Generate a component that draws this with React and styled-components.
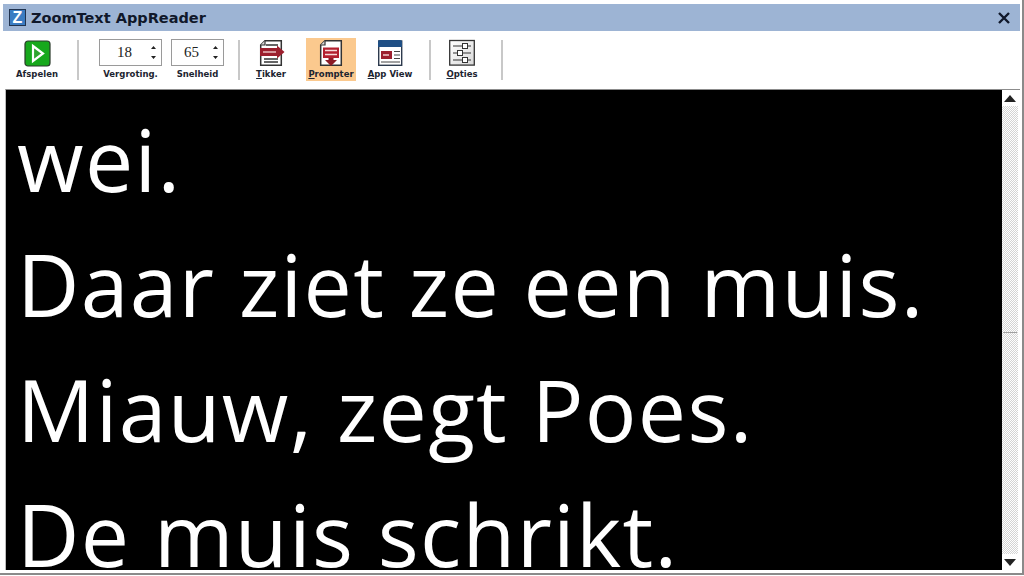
import React from 'react';
import styled, { createGlobalStyle } from 'styled-components';

const GlobalStyle = createGlobalStyle`
  html, body {
    margin: 0;
    padding: 0;
    background: #fff;
    overflow: hidden;
  }
`;

const Window = styled.div`
  width: 1024px;
  height: 575px;
  box-sizing: border-box;
  padding: 4px 2px 3px 3px;
  border-right: 2px solid #8a8a8a;
  border-bottom: 2px solid #8a8a8a;
  background: #fff;
  display: flex;
  flex-direction: column;
  overflow: hidden;
`;

const TitleBar = styled.div`
  height: 27px;
  flex: none;
  background: #9db4d4;
  display: flex;
  align-items: center;
  padding: 0 9px 0 6px;
  gap: 5px;
`;

const TitleLogo = styled.div`
  width: 17px;
  height: 17px;
  background: #3a7cc2;
  border: 1px solid #20334f;
  box-sizing: border-box;
  color: #fff;
  font: bold 16px/15px 'Liberation Sans', sans-serif;
  text-align: center;
`;

const TitleText = styled.div`
  flex: 1;
  font: bold 14.5px 'DejaVu Sans', sans-serif;
  color: #10182a;
`;

const Toolbar = styled.div`
  height: 58px;
  flex: none;
  display: flex;
  align-items: flex-start;
  padding: 7px 0 0 9px;
  box-sizing: border-box;
  background: #fff;
`;

const Tool = styled.div`
  width: 50px;
  height: 43px;
  flex: none;
  box-sizing: border-box;
  padding-bottom: 1px;
  display: flex;
  flex-direction: column;
  align-items: center;
  justify-content: flex-end;
  gap: 1px;
  margin-right: ${(p) => p.$gap || 0}px;
  background: ${(p) => (p.$active ? '#fbc98e' : 'transparent')};
`;

const ToolLabel = styled.span`
  font: bold 8.5px/12px 'DejaVu Sans', sans-serif;
  color: #1c2430;
  white-space: nowrap;
  u {
    text-decoration: underline;
  }
`;

const Divider = styled.div`
  width: 2px;
  height: 40px;
  flex: none;
  background: #c8c8c8;
  margin: 2px ${(p) => p.$right}px 0 ${(p) => p.$left}px;
`;

const SpinnerField = styled.div`
  width: ${(p) => p.$width}px;
  flex: none;
  display: flex;
  flex-direction: column;
  align-items: center;
  margin-right: ${(p) => p.$gap || 0}px;
  gap: 2px;
  padding-top: 1px;
`;

const SpinnerBox = styled.div`
  width: 100%;
  height: 27px;
  box-sizing: border-box;
  border: 1px solid #9a9a9a;
  display: flex;
  align-items: center;
  font: 15px 'Liberation Serif', serif;
  color: #222;
`;

const SpinnerValue = styled.span`
  flex: 1;
  text-align: center;
`;

const SpinnerArrows = styled.svg`
  width: 9px;
  height: 17px;
  margin-right: 3px;
  flex: none;
`;

const Content = styled.div`
  flex: 1;
  min-height: 0;
  display: flex;
  margin-left: 2px;
  border-top: 1px solid #8c8c8c;
  border-left: 1px solid #bdbdbd;
`;

const Reader = styled.div`
  flex: 1;
  min-width: 0;
  background: #000;
  color: #fff;
  overflow: hidden;
  padding: 6px 0 0 11px;
  font: 86px/125px 'Open Sans', sans-serif;
  letter-spacing: 1.3px;
`;

const ReaderLine = styled.div`
  white-space: nowrap;
`;

const Scrollbar = styled.div`
  width: 16px;
  flex: none;
  margin-right: 2px;
  display: flex;
  flex-direction: column;
  background: repeating-conic-gradient(#d4d4d4 0 25%, #fff 0 50%) 0 0 / 2px 2px;
`;

const ScrollButton = styled.div`
  height: 16px;
  flex: none;
  background: #fff;
  display: flex;
  align-items: center;
  justify-content: center;
`;

const ScrollThumb = styled.div`
  flex: none;
  height: 226px;
  border-bottom: 1px solid #a0a0a0;
  margin: 0 1px;
`;

const ScrollTrack = styled.div`
  flex: 1;
`;

function PageIcon({ children }) {
  return (
    <svg width="28" height="28" viewBox="0 0 28 28">
      <path d="M8 1.7 H24.3 V26.3 H3.7 V6 Z" fill="#fff" stroke="#333" strokeWidth="1.5" />
      <path d="M8 1.7 V6 H3.7" fill="#ddd" stroke="#333" strokeWidth="1.2" />
      {children}
    </svg>
  );
}

function SpinArrows() {
  return (
    <SpinnerArrows viewBox="0 0 9 17">
      <path d="M4.5 2 L7 5 H2 Z M4.5 15 L7 12 H2 Z" fill="#222" />
    </SpinnerArrows>
  );
}

export default function App() {
  return (
    <>
      <GlobalStyle />
      <Window>
        <TitleBar>
          <TitleLogo>Z</TitleLogo>
          <TitleText>ZoomText AppReader</TitleText>
          <svg width="14" height="14" viewBox="0 0 14 14">
            <path d="M2 2 L12 12 M12 2 L2 12" stroke="#10182a" strokeWidth="2.4" />
          </svg>
        </TitleBar>
        <Toolbar>
          <Tool $gap={15}>
            <svg width="27" height="27" viewBox="0 0 27 27">
              <rect x="1" y="1" width="25" height="25" rx="3" fill="#17a81c" stroke="#2a3a2a" strokeWidth="1.2" />
              <path d="M9 6 L19 13.5 L9 21 Z" fill="#2fa52f" stroke="#fff" strokeWidth="2.2" />
            </svg>
            <ToolLabel>Afspelen</ToolLabel>
          </Tool>
          <Divider $left={0} $right={20} />
          <SpinnerField $width={63} $gap={9}>
            <SpinnerBox>
              <SpinnerValue>18</SpinnerValue>
              <SpinArrows />
            </SpinnerBox>
            <ToolLabel>Vergroting.</ToolLabel>
          </SpinnerField>
          <SpinnerField $width={53}>
            <SpinnerBox>
              <SpinnerValue>65</SpinnerValue>
              <SpinArrows />
            </SpinnerBox>
            <ToolLabel>Snelheid</ToolLabel>
          </SpinnerField>
          <Divider $left={14} $right={6} />
          <Tool $gap={10}>
            <PageIcon>
              <path d="M9 6 H21 M7 20 H21 M7 23 H21" stroke="#333" strokeWidth="1.3" />
              <rect x="3" y="9" width="18" height="8" fill="#9c1f2e" />
              <path d="M6 13 H19" stroke="#f4d4d4" strokeWidth="1.3" />
              <path d="M20 6.5 L27.5 13 L20 19.5 Z" fill="#9c1f2e" />
            </PageIcon>
            <ToolLabel><u>T</u>ikker</ToolLabel>
          </Tool>
          <Tool $active $gap={9}>
            <PageIcon>
              <rect x="6" y="8.5" width="16" height="10.5" fill="#b3202f" />
              <path d="M8 11.5 H20 M8 15.5 H20" stroke="#f6dcdc" strokeWidth="1.6" />
              <path d="M11.5 19 H16.5 V21 H20 L14 27 L8 21 H11.5 Z" fill="#8c1b26" />
            </PageIcon>
            <ToolLabel><u>P</u>rompter</ToolLabel>
          </Tool>
          <Tool>
            <svg width="28" height="28" viewBox="0 0 28 28">
              <rect x="2.7" y="2" width="23" height="24.3" fill="#fff" stroke="#2d3a4d" strokeWidth="1.4" />
              <path d="M2 8 V3 Q2 1 4 1 H24 Q26 1 26 3 V8 Z" fill="#1f4f85" />
              <rect x="5" y="12" width="11" height="8" fill="#9c1f2e" />
              <path d="M7 16 H13" stroke="#f6dcdc" strokeWidth="1.4" />
              <path d="M18 12.5 H24 M18 16 H24 M18 19.5 H24 M5 23 H24" stroke="#444" strokeWidth="1.2" />
            </svg>
            <ToolLabel><u>A</u>pp View</ToolLabel>
          </Tool>
          <Divider $left={14} $right={6} />
          <Tool $gap={14}>
            <svg width="28" height="28" viewBox="0 0 28 28">
              <defs>
                <linearGradient id="optiesFill" x1="0" y1="0" x2="1" y2="1">
                  <stop offset="0" stopColor="#fff" />
                  <stop offset="1" stopColor="#d8d8d8" />
                </linearGradient>
              </defs>
              <rect x="1.7" y="1.5" width="24.6" height="24.6" fill="url(#optiesFill)" stroke="#333" strokeWidth="1.3" />
              <path d="M5 7 H23 M5 14 H23 M5 21 H23" stroke="#333" strokeWidth="1.2" />
              <rect x="14.5" y="4.5" width="5" height="5" fill="#fff" stroke="#333" />
              <rect x="9.5" y="11.5" width="5" height="5" fill="#fff" stroke="#333" />
              <rect x="14.5" y="18.5" width="5" height="5" fill="#fff" stroke="#333" />
            </svg>
            <ToolLabel><u>O</u>pties</ToolLabel>
          </Tool>
          <Divider $left={0} $right={0} />
        </Toolbar>
        <Content>
          <Reader>
            <ReaderLine>wei.</ReaderLine>
            <ReaderLine>Daar ziet ze een muis.</ReaderLine>
            <ReaderLine>Miauw, zegt Poes.</ReaderLine>
            <ReaderLine>De muis schrikt.</ReaderLine>
          </Reader>
          <Scrollbar>
            <ScrollButton>
              <svg width="12" height="7" viewBox="0 0 12 7"><path d="M6 0 L12 7 H0 Z" fill="#222" /></svg>
            </ScrollButton>
            <ScrollThumb />
            <ScrollTrack />
            <ScrollButton>
              <svg width="12" height="7" viewBox="0 0 12 7"><path d="M0 0 H12 L6 7 Z" fill="#222" /></svg>
            </ScrollButton>
          </Scrollbar>
        </Content>
      </Window>
    </>
  );
}
